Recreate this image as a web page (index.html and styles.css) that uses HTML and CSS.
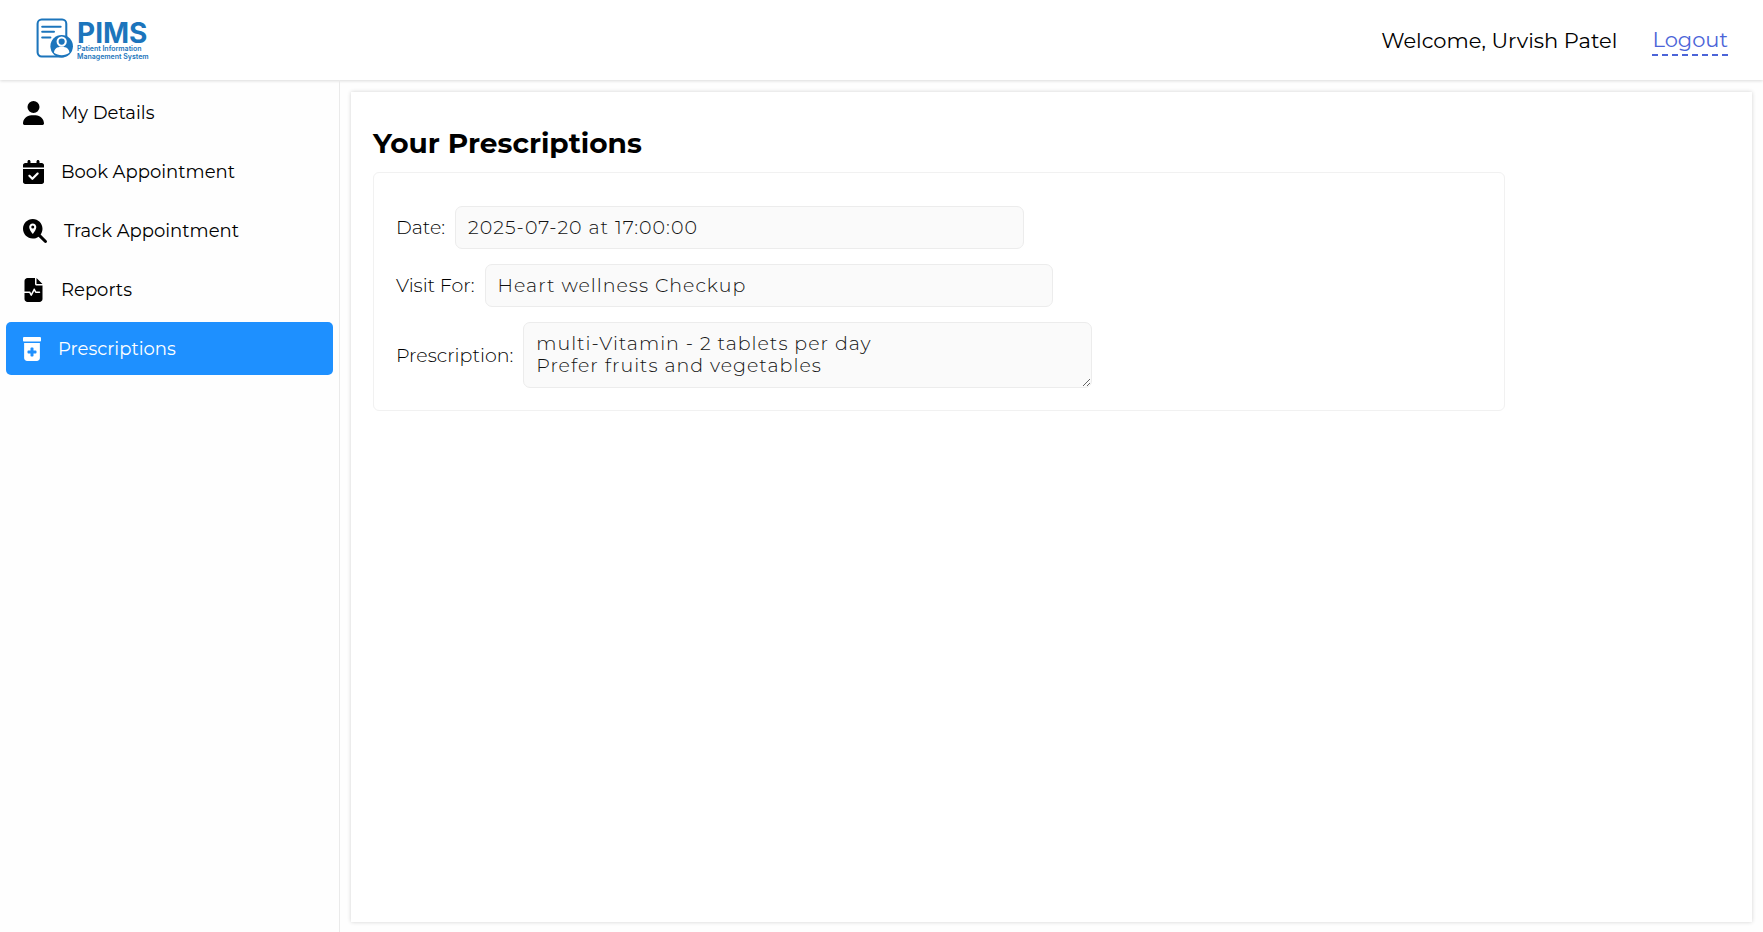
FILE: index.html
```html
<!DOCTYPE html>
<html lang="en">
<head>
<meta charset="utf-8">
<title>PIMS - Your Prescriptions</title>
<meta name="viewport" content="width=device-width, initial-scale=1">
<link rel="stylesheet" href="styles.css">
</head>
<body>
<header class="header">
  <div class="logo">
    <svg class="logo-mark" viewBox="0 0 36 40" aria-hidden="true">
      <rect x="1.5" y="1.5" width="28" height="36" rx="4" fill="none" stroke="#1c75bc" stroke-width="2"/>
      <path d="M6 8.500h18M6 13.500h11.500M6 19h8" fill="none" stroke="#1c75bc" stroke-width="2" stroke-linecap="round"/>
      <circle cx="25" cy="27.500" r="11" fill="#1c75bc"/>
      <circle cx="25" cy="23" r="4" fill="#1c75bc" stroke="#fff" stroke-width="2"/>
      <path d="M17.500 34c0-4 3-6 7.500-6s7.500 2 7.500 6c-4 3-11 3-15 0z" fill="#fff"/>
    </svg>
    <div class="logo-text">
      <span class="logo-name">PIMS</span>
      <span class="logo-sub">Patient Information</span>
      <span class="logo-sub">Management System</span>
    </div>
  </div>
  <div class="account">
    <span>Welcome, Urvish Patel</span>
    <a class="logout" href="#">Logout</a>
  </div>
</header>
<div class="layout">
  <nav class="sidebar">
    <a class="nav-item" href="#">
      <svg class="nav-icon" viewBox="0 0 448 512" aria-hidden="true"><path d="M224 256A128 128 0 1 0 224 0a128 128 0 1 0 0 256zm-45.700 48C79.800 304 0 383.800 0 482.300C0 498.700 13.300 512 29.700 512H418.300c16.400 0 29.700-13.300 29.700-29.700C448 383.800 368.200 304 269.700 304H178.300z"/></svg>
      My Details
    </a>
    <a class="nav-item" href="#">
      <svg class="nav-icon" viewBox="0 0 448 512" aria-hidden="true"><path d="M128 0c17.700 0 32 14.300 32 32V64H288V32c0-17.700 14.300-32 32-32s32 14.300 32 32V64h48c26.500 0 48 21.500 48 48v48H0V112C0 85.500 21.500 64 48 64H96V32c0-17.700 14.300-32 32-32zM0 192H448V464c0 26.500-21.500 48-48 48H48c-26.500 0-48-21.500-48-48V192zM329 305c9.400-9.400 9.400-24.600 0-33.900s-24.600-9.400-33.900 0l-95 95-47-47c-9.400-9.400-24.600-9.400-33.900 0s-9.400 24.600 0 33.900l64 64c9.400 9.400 24.600 9.400 33.900 0L329 305z" fill-rule="evenodd"/></svg>
      Book Appointment
    </a>
    <a class="nav-item" href="#">
      <svg class="nav-icon nav-icon-wide" viewBox="0 0 512 512" aria-hidden="true"><path fill-rule="evenodd" d="M416 208c0 45.900-14.900 88.300-40 122.700L502.600 457.400c12.500 12.500 12.500 32.800 0 45.300s-32.800 12.500-45.300 0L330.700 376c-34.400 25.200-76.800 40-122.700 40C93.100 416 0 322.900 0 208S93.100 0 208 0S416 93.100 416 208zM208 96c-42 0-76 34-76 76 0 50 47 112 67 136 5 6 13 6 18 0 20-24 67-86 67-136 0-42-34-76-76-76zm0 108a32 32 0 1 0 0-64 32 32 0 1 0 0 64z"/></svg>
      Track Appointment
    </a>
    <a class="nav-item" href="#">
      <svg class="nav-icon" viewBox="0 0 448 512" aria-hidden="true"><path d="M96 0C60.700 0 32 28.700 32 64V288H144c6 0 11.600 3.400 14.300 8.800L176 332.200l49.700-99.400c2.700-5.400 8.300-8.800 14.300-8.800s11.600 3.400 14.300 8.800L281.900 288H352a16 16 0 1 1 0 32H272c-6.100 0-11.600-3.400-14.300-8.800L240 275.800l-49.700 99.400c-2.700 5.400-8.300 8.800-14.300 8.800s-11.600-3.400-14.300-8.800L134.100 320H32V448c0 35.300 28.700 64 64 64H352c35.300 0 64-28.700 64-64V160H288c-17.700 0-32-14.300-32-32V0H96zM288 0V128H416L288 0z"/></svg>
      Reports
    </a>
    <a class="nav-item active" href="#" aria-current="page">
      <svg class="nav-icon nav-icon-narrow" viewBox="0 0 384 512" aria-hidden="true"><path fill-rule="evenodd" d="M24 0H360c13.300 0 24 10.700 24 24V72c0 13.300-10.700 24-24 24H24C10.700 96 0 85.300 0 72V24C0 10.700 10.700 0 24 0zM24 128H360V448c0 35.300-28.700 64-64 64H88c-35.300 0-64-28.700-64-64V128zM160 240v48H112c-8.800 0-16 7.200-16 16v32c0 8.800 7.200 16 16 16h48v48c0 8.800 7.200 16 16 16h32c8.800 0 16-7.200 16-16V352h48c8.800 0 16-7.200 16-16V304c0-8.800-7.200-16-16-16H224V240c0-8.800-7.200-16-16-16H176c-8.800 0-16 7.200-16 16z"/></svg>
      Prescriptions
    </a>
  </nav>
  <main class="panel">
    <h2 class="title">Your Prescriptions</h2>
    <form class="card">
      <div class="field">
        <label for="date">Date:</label>
        <input class="control" id="date" type="text" value="2025-07-20 at 17:00:00" readonly>
      </div>
      <div class="field">
        <label for="visit">Visit For:</label>
        <input class="control" id="visit" type="text" value="Heart wellness Checkup" readonly>
      </div>
      <div class="field">
        <label for="prescription">Prescription:</label>
        <textarea class="control" id="prescription" rows="2" readonly>multi-Vitamin - 2 tablets per day
Prefer fruits and vegetables</textarea>
      </div>
    </form>
  </main>
</div>
</body>
</html>
```
FILE: styles.css
```css
* {
  box-sizing: border-box;
}

body {
  margin: 0;
  min-height: 100vh;
  display: flex;
  flex-direction: column;
  background: #fefefe;
  color: #000;
  font-family: Montserrat, Inter, sans-serif;
  font-size: 18px;
  font-weight: 400;
}

.header {
  display: flex;
  align-items: center;
  justify-content: space-between;
  height: 80px;
  padding: 0 35px 0 36px;
  background: #fff;
  box-shadow: 0 1px 3px rgba(0, 0, 0, 0.14);
}

.logo {
  display: flex;
  align-items: center;
  gap: 4px;
  color: #1c75bc;
}

.logo-mark {
  width: 37px;
  height: 41px;
  margin-bottom: 4px;
}

.logo-text {
  display: flex;
  flex-direction: column;
  padding-top: 2px;
  font-family: Inter, sans-serif;
}

.logo-name {
  font-size: 28px;
  font-weight: 700;
  line-height: 24px;
}

.logo-sub {
  font-size: 7px;
  font-weight: 600;
  line-height: 8px;
}

.account {
  display: flex;
  align-items: center;
  gap: 35px;
  padding-top: 1px;
  font-size: 21px;
}

.logout {
  color: #4b64d8;
  text-decoration: none;
  line-height: 28px;
  border-bottom: 2px dashed #4b64d8;
}

.layout {
  flex: 1;
  display: flex;
}

.sidebar {
  flex: 0 0 340px;
  display: flex;
  flex-direction: column;
  gap: 6px;
  padding: 6px;
  border-right: 1px solid #eaeaea;
}

.nav-item {
  display: flex;
  align-items: center;
  gap: 17px;
  height: 53px;
  padding: 0 17px;
  border-radius: 5px;
  color: #000;
  text-decoration: none;
}

.nav-icon {
  width: 21px;
  height: 24px;
  fill: #000;
}

.nav-icon-wide {
  width: 24px;
}

.nav-icon-narrow {
  width: 18px;
}

.nav-item.active {
  background: #1e90ff;
  color: #fff;
}

.nav-item.active .nav-icon {
  fill: #fff;
}

.panel {
  flex: 1;
  margin: 12px 11px 10px;
  padding: 34px 22px;
  background: #fff;
  box-shadow: 0 0 4px rgba(0, 0, 0, 0.18);
}

.title {
  margin: 0 0 12px;
  color: #000;
  font-size: 28px;
  font-weight: 700;
  line-height: 34px;
}

.card {
  box-sizing: content-box;
  width: 80%;
  display: flex;
  flex-direction: column;
  gap: 15px;
  padding: 33px 22px 22px;
  border: 1px solid #f1f1f1;
  border-radius: 6px;
}

.field {
  display: flex;
  align-items: center;
  gap: 10px;
  font-size: 19px;
  font-weight: 300;
}

.control {
  box-sizing: content-box;
  width: 50%;
  padding: 10px 12px;
  border: 1px solid #ececec;
  border-radius: 7px;
  background: #fafafa;
  color: #111;
  font: inherit;
  line-height: 22px;
  letter-spacing: 1px;
  outline: none;
}

input.control {
  height: 21px;
}

textarea.control {
  overflow: hidden;
  resize: both;
}
```
